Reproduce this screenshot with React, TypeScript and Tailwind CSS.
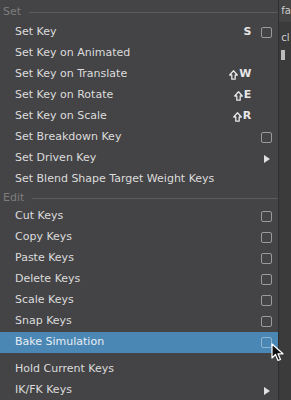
import React from "react";

type Item = { label: string; shortcut?: string; shift?: boolean; box?: boolean; arrow?: boolean; hl?: boolean };

const Box = ({ hl }: { hl?: boolean }) => (
  <div className={`w-[11px] h-[11px] rounded-[2px] border ${hl ? "border-[#8fb4d0]" : "border-[#9a9a9a]"}`} />
);

const Arrow = () => (
  <svg width="6" height="8" viewBox="0 0 6 8"><path d="M0 0 L6 4 L0 8 Z" fill="#e0e0e0" /></svg>
);

const Shift = () => (
  <svg width="9" height="10" viewBox="0 0 9 10" className="mr-[1px]">
    <path d="M4.5 0.8 L8.3 5 L6.2 5 L6.2 9.2 L2.8 9.2 L2.8 5 L0.7 5 Z" fill="none" stroke="#e6e6e6" strokeWidth="1.3" strokeLinejoin="round" />
  </svg>
);

const Row = ({ it }: { it: Item }) => (
  <div className={`h-[21px] flex items-center pl-[15px] pr-[5px] ${it.hl ? "bg-[#4b87b5] text-[#e8eef4]" : "text-[#dcdcdc]"}`}>
    <span className="flex-1 truncate">{it.label}</span>
    {it.shortcut && (
      <span className="mr-[9px] flex items-center font-bold text-[#e6e6e6]">
        {it.shift && <Shift />}
        {it.shortcut}
      </span>
    )}
    <div className="w-[13px] flex justify-center">
      {it.box && <Box hl={it.hl} />}
      {it.arrow && <Arrow />}
    </div>
  </div>
);

const Header = ({ label, cls }: { label: string; cls: string }) => (
  <div className={`flex items-center gap-[8px] pl-[3px] ${cls}`}>
    <span className="text-[#7d7d7d]">{label}</span>
    <div className="flex-1 h-px bg-[#5c5c5c]" />
  </div>
);

export default function App() {
  const set: Item[] = [
    { label: "Set Key", shortcut: "S", box: true },
    { label: "Set Key on Animated" },
    { label: "Set Key on Translate", shortcut: "W", shift: true },
    { label: "Set Key on Rotate", shortcut: "E", shift: true },
    { label: "Set Key on Scale", shortcut: "R", shift: true },
    { label: "Set Breakdown Key", box: true },
    { label: "Set Driven Key", arrow: true },
    { label: "Set Blend Shape Target Weight Keys" },
  ];
  const edit: Item[] = [
    { label: "Cut Keys", box: true },
    { label: "Copy Keys", box: true },
    { label: "Paste Keys", box: true },
    { label: "Delete Keys", box: true },
    { label: "Scale Keys", box: true },
    { label: "Snap Keys", box: true },
    { label: "Bake Simulation", box: true, hl: true },
  ];
  const more: Item[] = [
    { label: "Hold Current Keys" },
    { label: "IK/FK Keys", arrow: true },
  ];
  return (
    <div className="w-[291px] h-[400px] flex bg-[#3a3a3a] overflow-hidden relative" style={{ fontFamily: '"DejaVu Sans", sans-serif' }}>
      <div className="w-[283px] h-full bg-[#444446] text-[11px] border-r border-[#2e2e2e]">
        <Header label="Set" cls="h-[22px] pt-[2px]" />
        {set.map((it) => <Row key={it.label} it={it} />)}
        <Header label="Edit" cls="h-[16px]" />
        {edit.map((it) => <Row key={it.label} it={it} />)}
        <div className="h-[6px]" />
        {more.map((it) => <Row key={it.label} it={it} />)}
      </div>
      <div className="flex-1 flex flex-col text-[10px] text-[#cfcfcf] bg-[#3b3b3b]">
        <div className="h-[22px] pt-[3px] pl-[2px] bg-[#444]">fa</div>
        <div className="h-[8px]" />
        <div className="h-[16px] pl-[2px]">cl</div>
        <div className="ml-[2px] mt-[4px] w-[4px] h-[10px] bg-[#bdbdbd]" />
      </div>
      <svg className="absolute left-[271px] top-[343px]" width="14" height="20" viewBox="0 0 14 20">
        <path d="M1 1 L1 15 L4.5 11.5 L7 17.5 L9.5 16.5 L7 10.8 L12 10.8 Z" fill="#111" stroke="#fff" strokeWidth="1.2" strokeLinejoin="round" />
      </svg>
    </div>
  );
}
